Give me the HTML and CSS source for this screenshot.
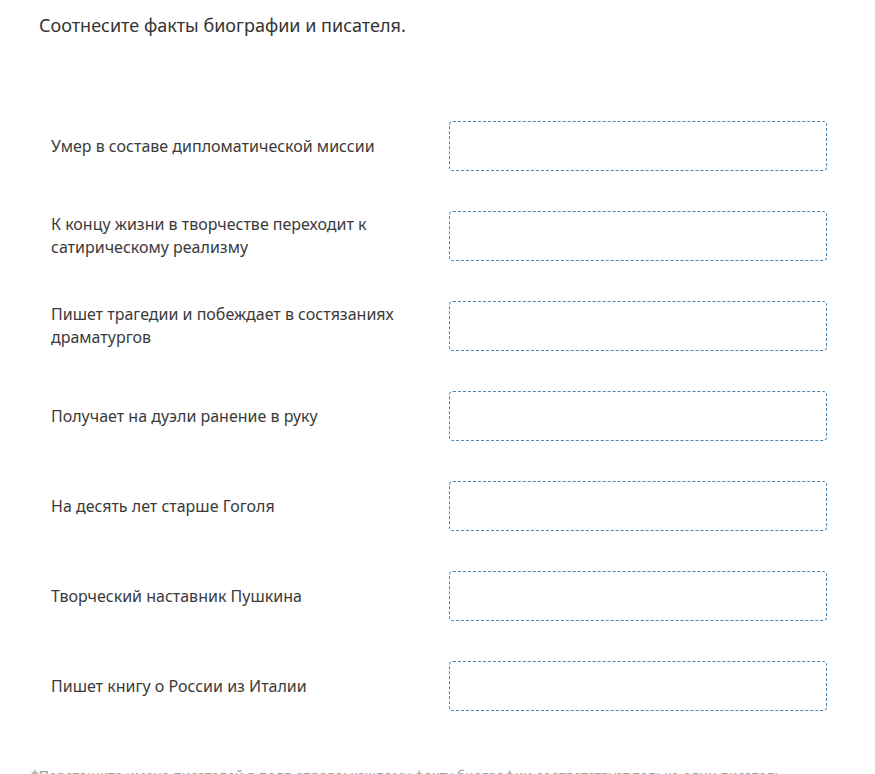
FILE: index.html
```html
<!DOCTYPE html>
<html lang="ru">
<head>
<meta charset="utf-8">
<link rel="stylesheet" href="styles.css">
</head>
<body>
<div class="page">
  <p class="title">Соотнесите факты биографии и писателя.</p>
  <div class="match">
    <div class="label">Умер в составе дипломатической миссии</div>
    <div class="drop"></div>
    <div class="label">К концу жизни в творчестве переходит к сатирическому реализму</div>
    <div class="drop"></div>
    <div class="label">Пишет трагедии и побеждает в состязаниях драматургов</div>
    <div class="drop"></div>
    <div class="label">Получает на дуэли ранение в руку</div>
    <div class="drop"></div>
    <div class="label">На десять лет старше Гоголя</div>
    <div class="drop"></div>
    <div class="label">Творческий наставник Пушкина</div>
    <div class="drop"></div>
    <div class="label">Пишет книгу о России из Италии</div>
    <div class="drop"></div>
  </div>
  <p class="note">*Перетащите имена писателей в поля справа: каждому факту биографии соответствует только один писатель</p>
</div>
</body>
</html>
```
FILE: styles.css
```css
html, body {
  margin: 0;
  padding: 0;
  background: #ffffff;
}
body {
  font-family: "Noto Sans", "Open Sans", sans-serif;
  color: #333333;
}
.page {
  padding: 12px 48px 0 39px;
}
.title {
  margin: 0;
  font-size: 18px;
  line-height: 26px;
  color: #333333;
}
.match {
  margin-top: 83px;
  padding-left: 12px;
  display: grid;
  grid-template-columns: 360px 378px;
  column-gap: 38px;
  row-gap: 40px;
}
.label {
  font-size: 16px;
  line-height: 23px;
  color: #3a3a3a;
  display: flex;
  align-items: center;
  min-height: 50px;
}
.drop {
  height: 48px;
  border: 1px dashed #4a86ae;
  border-radius: 4px;
}
.note {
  margin: 55px 0 0 -8px;
  font-size: 14px;
  line-height: 20px;
  color: #a0a0a0;
  white-space: nowrap;
}
```
